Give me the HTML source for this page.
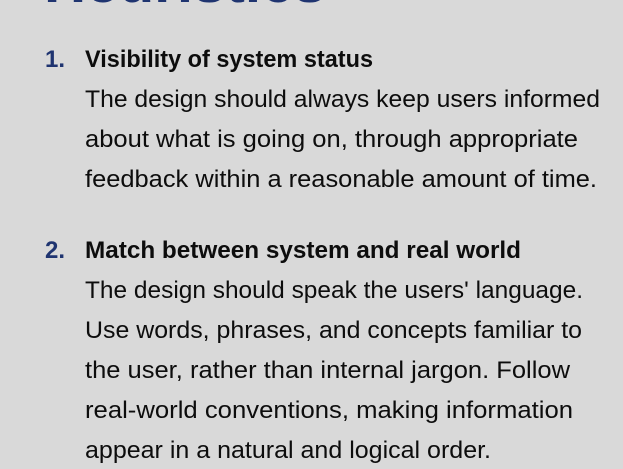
<!DOCTYPE html>
<html><head><meta charset="utf-8"><style>
html,body{margin:0;padding:0;background:#d9d9d9;width:623px;height:469px;overflow:hidden}
svg{display:block}
text{font-family:"Liberation Sans",sans-serif;font-size:24.5px;fill:#0d0d0d}
.b{font-weight:bold;font-size:24px}
.n{fill:#1f3470;font-weight:bold;font-size:24px}
</style></head><body>
<svg width="623" height="469" xmlns="http://www.w3.org/2000/svg">
<text x="44" y="2" style="font-size:56px;fill:#1f3470;font-weight:bold" textLength="282" lengthAdjust="spacingAndGlyphs">Heuristics</text>
<text class="n" x="45" y="67">1.</text>
<text class="b" x="85" y="67" textLength="288" lengthAdjust="spacingAndGlyphs">Visibility of system status</text>
<text x="85" y="107" textLength="515" lengthAdjust="spacingAndGlyphs">The design should always keep users informed</text>
<text x="85" y="147" textLength="493" lengthAdjust="spacingAndGlyphs">about what is going on, through appropriate</text>
<text x="85" y="187" textLength="512" lengthAdjust="spacingAndGlyphs">feedback within a reasonable amount of time.</text>
<text class="n" x="45" y="258">2.</text>
<text class="b" x="85" y="258" textLength="436" lengthAdjust="spacingAndGlyphs">Match between system and real world</text>
<text x="85" y="298" textLength="498" lengthAdjust="spacingAndGlyphs">The design should speak the users' language.</text>
<text x="85" y="338" textLength="497" lengthAdjust="spacingAndGlyphs">Use words, phrases, and concepts familiar to</text>
<text x="85" y="378" textLength="485" lengthAdjust="spacingAndGlyphs">the user, rather than internal jargon. Follow</text>
<text x="85" y="418" textLength="488" lengthAdjust="spacingAndGlyphs">real-world conventions, making information</text>
<text x="85" y="458" textLength="406" lengthAdjust="spacingAndGlyphs">appear in a natural and logical order.</text>
</svg>
</body></html>
